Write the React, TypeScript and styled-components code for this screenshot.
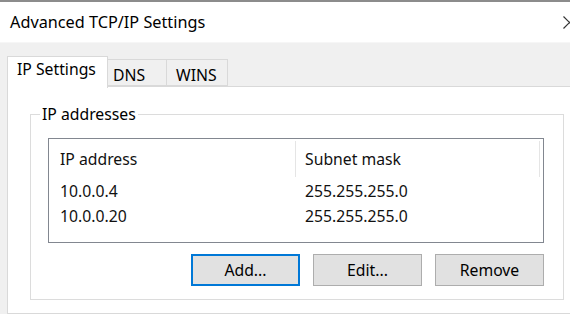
import styled, { createGlobalStyle } from 'styled-components'

const GlobalStyle = createGlobalStyle`
  html, body {
    margin: 0;
    padding: 0;
    background: #ffffff;
  }
  body {
    font-family: "Segoe UI", "Noto Sans", "Open Sans", sans-serif;
    color: #111111;
  }
`

type Address = {
  ip: string
  mask: string
}

type TabDef = {
  label: string
  width: number
  inset: number
}

const addresses: Address[] = [
  { ip: '10.0.0.4', mask: '255.255.255.0' },
  { ip: '10.0.0.20', mask: '255.255.255.0' },
]

const tabs: TabDef[] = [
  { label: 'IP Settings', width: 101, inset: 9 },
  { label: 'DNS', width: 59, inset: 5 },
  { label: 'WINS', width: 61, inset: 9 },
]

const UI_FONT = '15.75px'

export default function App() {
  return (
    <>
      <GlobalStyle />
      <Window>
        <TitleBar>
          <Title>Advanced TCP/IP Settings</Title>
          <CloseIcon viewBox="0 0 13 13">
            <path d="M0.5 0.5 L12.5 12.5 M12.5 0.5 L0.5 12.5" />
          </CloseIcon>
        </TitleBar>
        <Body>
          <TabStrip>
            {tabs.map((tab, i) => (
              <Tab key={tab.label} $active={i === 0} $width={tab.width} $inset={tab.inset}>
                {tab.label}
              </Tab>
            ))}
          </TabStrip>
          <TabPage>
            <GroupBox>
              <GroupLegend>IP addresses</GroupLegend>
              <ListView>
                <HeaderRow>
                  <HeaderCell $width={247} $inset={11}>IP address</HeaderCell>
                  <HeaderCell $width={244} $inset={9}>Subnet mask</HeaderCell>
                </HeaderRow>
                {addresses.map((a) => (
                  <Row key={a.ip}>
                    <Cell $width={247} $inset={11}>{a.ip}</Cell>
                    <Cell $width={244} $inset={9}>{a.mask}</Cell>
                  </Row>
                ))}
              </ListView>
              <ButtonRow>
                <Button $default>Add...</Button>
                <Button>Edit...</Button>
                <Button>Remove</Button>
              </ButtonRow>
            </GroupBox>
          </TabPage>
        </Body>
      </Window>
    </>
  )
}

const Window = styled.div`
  width: 570px;
  height: 314px;
  overflow: hidden;
  display: flex;
  flex-direction: column;
  background: #f0f0f0;
`
const TitleBar = styled.div`
  display: flex;
  align-items: center;
  justify-content: space-between;
  height: 43px;
  box-sizing: border-box;
  padding-left: 10px;
  border-top: 2px solid #8c8c8c;
  background: #ffffff;
  border-bottom: 1px solid #f6f6f6;
`
const Title = styled.div`
  font-size: 16.25px;
  line-height: 20px;
  color: #000000;
`
const CloseIcon = styled.svg`
  width: 13px;
  height: 13px;
  margin-right: -6px;
  fill: none;
  stroke: #333333;
  stroke-width: 1.2;
`
const Body = styled.div`
  flex: 1;
  display: flex;
  flex-direction: column;
  padding: 13px 0 0 7px;
`
const TabStrip = styled.div`
  display: flex;
  align-items: flex-end;
  height: 30px;
`
const Tab = styled.div<{ $active?: boolean; $width: number; $inset: number }>`
  box-sizing: border-box;
  width: ${({ $width }) => $width}px;
  height: ${({ $active }) => ($active ? 32 : 27)}px;
  padding: ${({ $active }) => ($active ? 2 : 5)}px 0 0 ${({ $inset }) => $inset}px;
  margin-bottom: ${({ $active }) => ($active ? -2 : 0)}px;
  border: 1px solid #d9d9d9;
  border-bottom: ${({ $active }) => ($active ? 'none' : '1px solid #d9d9d9')};
  border-left: ${({ $active }) => ($active ? '1px solid #d9d9d9' : 'none')};
  background: ${({ $active }) => ($active ? '#ffffff' : '#f0f0f0')};
  position: relative;
  z-index: ${({ $active }) => ($active ? 1 : 0)};
  font-size: ${UI_FONT};
  line-height: 20px;
  color: #000000;
  white-space: nowrap;
`
const TabPage = styled.div`
  flex: 1;
  margin-right: -10px;
  padding: 17px 0 0 22px;
  background: #ffffff;
  border: 1px solid #d9d9d9;
`
const GroupBox = styled.fieldset`
  box-sizing: border-box;
  width: 534px;
  margin: 0;
  padding: 14px 19px 13px 17px;
  border: 1px solid #dcdcdc;
  min-inline-size: 0;
`
const GroupLegend = styled.legend`
  margin-left: -8px;
  padding: 0 2px;
  font-size: ${UI_FONT};
  line-height: 20px;
  color: #000000;
`
const ListView = styled.div`
  box-sizing: border-box;
  width: 496px;
  height: 105px;
  border: 1px solid #828790;
  background: #ffffff;
`
const HeaderRow = styled.div`
  display: flex;
  height: 39px;
  align-items: center;
`
const HeaderCell = styled.div<{ $width: number; $inset: number }>`
  box-sizing: border-box;
  width: ${({ $width }) => $width}px;
  height: 36px;
  display: flex;
  align-items: center;
  padding-left: ${({ $inset }) => $inset}px;
  border-right: 1px solid #e5e5e5;
  font-size: ${UI_FONT};
  line-height: 20px;
  color: #111111;
`
const Row = styled.div`
  display: flex;
  height: 25px;
  align-items: center;
`
const Cell = styled.div<{ $width: number; $inset: number }>`
  box-sizing: border-box;
  width: ${({ $width }) => $width}px;
  padding-left: ${({ $inset }) => $inset}px;
  font-size: ${UI_FONT};
  line-height: 20px;
  color: #111111;
`
const ButtonRow = styled.div`
  display: flex;
  justify-content: flex-end;
  gap: 13px;
  margin-top: 11px;
`
const Button = styled.button<{ $default?: boolean }>`
  box-sizing: border-box;
  width: 109px;
  height: 32px;
  padding: 0;
  background: #e1e1e1;
  border: ${({ $default }) => ($default ? '2px solid #0078d7' : '1px solid #adadad')};
  border-radius: 0;
  font-family: inherit;
  font-size: ${UI_FONT};
  line-height: 20px;
  color: #000000;
`
